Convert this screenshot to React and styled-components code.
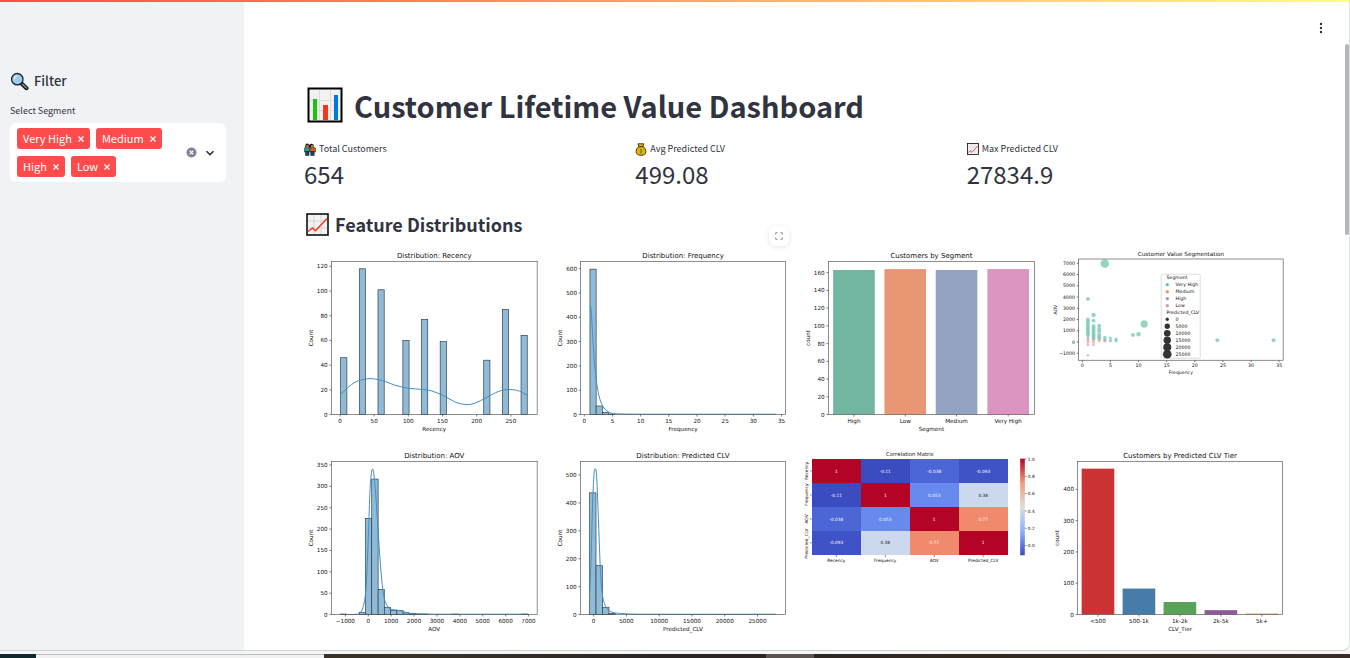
import React from "react";
import styled, { createGlobalStyle } from "styled-components";

const GlobalStyle = createGlobalStyle`
  *, *::before, *::after { box-sizing: border-box; }
  body {
    margin: 0;
    background: #f4f5f5;
    color: #31333f;
    font-family: "Noto Sans CJK SC", "Open Sans", sans-serif;
    font-size: 9px;
  }
  h1, h2, p, dl, dt, dd, figure { margin: 0; }
`;

/* ---------- page shell ---------- */

const Page = styled.div`
  display: flex;
  flex-direction: column;
  height: 100vh;
`;

const Window = styled.div`
  position: relative;
  display: flex;
  flex: 1;
  min-height: 0;
  overflow: hidden;
  background: #ffffff;
  border-bottom: 1px solid #cfd2d2;
  border-right: 1px solid #dfe1e1;
  border-bottom-right-radius: 8px;
`;

const Decoration = styled.div`
  position: absolute;
  top: 0;
  left: 0;
  right: 0;
  height: 2px;
  background: linear-gradient(90deg, #ff4b4b, #fffd80);
  z-index: 2;
`;

const ScrollThumb = styled.div`
  position: absolute;
  top: 44px;
  right: 0;
  width: 4px;
  height: 191px;
  border-radius: 2px;
  background: #b4b6ba;
`;

const MenuButton = styled.button`
  position: absolute;
  top: 18px;
  right: 18px;
  width: 20px;
  height: 20px;
  padding: 0;
  border: 0;
  background: none;
  display: grid;
  place-items: center;
`;

const DesktopEdge = styled.div`
  display: flex;
  height: 4px;
  margin-top: 3px;
  background: linear-gradient(90deg, #33291f, #3a3327 30%, #2a2425 50%, #33291f 70%, #3a2c24);
`;

const EdgePart = styled.div`
  width: ${(p) => p.$width}px;
  margin-left: ${(p) => p.$gap || 0}px;
  background: ${(p) => p.$color};
  border-top: 1px solid ${(p) => p.$line || p.$color};
`;

/* ---------- sidebar ---------- */

const Sidebar = styled.aside`
  flex: 0 0 244px;
  padding: 70px 18px 0 10px;
  background: #f0f2f6;
`;

const SidebarTitle = styled.h2`
  display: flex;
  align-items: center;
  gap: 5px;
  height: 22px;
  font-size: 13px;
  line-height: 22px;
  font-weight: 500;
`;

const FieldLabel = styled.label`
  display: block;
  margin-top: 11px;
  line-height: 16px;
`;

const MultiSelect = styled.div`
  display: flex;
  align-items: center;
  margin-top: 4px;
  padding: 5px 10px 5px 7px;
  border-radius: 6px;
  background: #ffffff;
`;

const Tags = styled.div`
  display: flex;
  flex: 1;
  flex-wrap: wrap;
  gap: 7px 6px;
`;

const Tag = styled.span`
  display: flex;
  align-items: center;
  gap: 5px;
  height: 21px;
  padding: 0 5px 0 6px;
  border-radius: 3px;
  background: #ff4b4b;
  color: #ffffff;
  font-size: 11px;
  line-height: 21px;
`;

const IconButton = styled.button`
  display: grid;
  place-items: center;
  padding: 0;
  border: 0;
  background: none;
  color: inherit;
`;

const SearchInput = styled.input`
  width: 24px;
  height: 21px;
  padding: 0;
  border: 0;
  outline: 0;
  background: transparent;
  font: inherit;
`;

const SelectActions = styled.div`
  display: flex;
  align-items: center;
  gap: 7px;
`;

/* ---------- main column ---------- */

const Main = styled.main`
  flex: 1;
  min-width: 0;
  padding: 87px 63px 0 60px;
`;

const Title = styled.h1`
  display: flex;
  align-items: center;
  gap: 11px;
  padding-left: 3px;
  font-size: 29px;
  line-height: 36px;
  font-weight: 700;
`;

const Metrics = styled.dl`
  display: grid;
  grid-template-columns: repeat(3, 1fr);
  gap: 12px;
  margin-top: 18px;
`;

const MetricLabel = styled.dt`
  display: flex;
  align-items: center;
  gap: 3px;
  line-height: 16px;
`;

const MetricValue = styled.dd`
  margin-top: 1px;
  font-size: 24px;
  line-height: 32px;
`;

const SectionTitle = styled.h2`
  display: flex;
  align-items: center;
  gap: 6px;
  margin-top: 20px;
  padding-left: 2px;
  font-size: 18px;
  line-height: 28px;
  font-weight: 600;
`;

const Charts = styled.div`
  display: grid;
  grid-template-columns: repeat(4, 1fr);
  align-items: start;
  gap: 16px 12px;
  margin-top: 12px;
`;

const Figure = styled.figure`
  position: relative;
`;

const Plot = styled.svg`
  display: block;
  width: 100%;
  height: auto;
  font-family: "DejaVu Sans", sans-serif;
  fill: #111111;
`;

const ExpandButton = styled(IconButton)`
  position: absolute;
  top: -24px;
  right: 0;
  width: 20px;
  height: 20px;
  border-radius: 6px;
  background: #ffffff;
  color: #8d9099;
  box-shadow: 0 1px 5px rgba(49, 51, 63, 0.12);
`;

/* ---------- icons ---------- */

const MagnifierIcon = () => (
  <svg width="19" height="19" viewBox="0 0 19 19" aria-hidden="true">
    <path d="M11.500 11.500l5 4.700" stroke="#111" strokeWidth="4" strokeLinecap="round" />
    <path d="M12.500 12.400l4 3.600" stroke="#8a8a8a" strokeWidth="1.600" strokeLinecap="round" />
    <circle cx="7.300" cy="7.200" r="5.700" fill="#9ccbf0" stroke="#222" strokeWidth="1.300" />
    <path d="M4.200 7.200a3.200 3.200 0 0 1 3-3.200" stroke="#e3f3ff" strokeWidth="1.200" fill="none" />
  </svg>
);

const BarChartIcon = () => (
  <svg width="36" height="36" viewBox="0 0 36 36" aria-hidden="true">
    <rect x="1.500" y="1.500" width="33" height="33" fill="#f2f2f2" stroke="#000" strokeWidth="2" />
    <path d="M12.500 3v30M23.500 3v30M3 13.500h30M3 23.500h30" stroke="#dcdcdc" />
    <rect x="6" y="12" width="4" height="21" fill="#16c60c" />
    <rect x="16" y="18" width="5" height="15" fill="#f03a17" />
    <rect x="27" y="8" width="4" height="25" fill="#0078d7" />
  </svg>
);

const LineChartIcon = ({ size }) => (
  <svg width={size} height={size} viewBox="0 0 23 23" aria-hidden="true">
    <rect x="1" y="1" width="21" height="21" fill="#f2f2f2" stroke="#111" strokeWidth="1.600" />
    <path d="M8 2v19M15 2v19M2 8h19M2 15h19" stroke="#d4d4d4" />
    <path d="M2 18.500l4.500-3.500 3 2.800L21 5.500" fill="none" stroke="#f03a17" strokeWidth="1.500" />
  </svg>
);

const PeopleIcon = () => (
  <svg width="12" height="13" viewBox="0 0 12 13" aria-hidden="true">
    <path d="M.8 4.500L1.600 1.500Q3.500-.5 5.300 2q1.900-2.300 4.300-.2l.8 3.200z" fill="#111" />
    <path d="M.4 5.300Q3 3.300 5.700 5.300V9H.4z" fill="#23a08b" stroke="#111" strokeWidth=".5" />
    <path d="M6.100 5.300Q9 3.300 11.600 5.300V9H6.100z" fill="#e8590c" stroke="#111" strokeWidth=".5" />
    <circle cx="3.400" cy="3.200" r="1.500" fill="#b87636" />
    <circle cx="8.300" cy="3.200" r="1.500" fill="#b87636" />
    <path d="M1.500 8.500h3.500v4H1.500zM6.700 8.500h3.500v4H6.700z" fill="#174966" stroke="#111" strokeWidth=".5" />
  </svg>
);

const MoneyIcon = () => (
  <svg width="12" height="13" viewBox="0 0 12 13" aria-hidden="true">
    <path d="M3 .8h5.800L7.900 3.500Q10.900 5.200 10.900 8.500q0 3.800-4.900 3.800T1.100 8.500Q1.100 5.200 4 3.500z" fill="#f2b200" stroke="#3b2c00" strokeWidth=".9" />
    <path d="M3.700 3.700h4.600" stroke="#3b2c00" />
    <path d="M7.400 6.800Q4.900 6 5 7.400q2.300.5 2.200 1.500Q6.700 10 4.700 9.400M6 5.800v4.900" fill="none" stroke="#2c9a3c" strokeWidth=".8" />
  </svg>
);

const CloseIcon = () => (
  <svg width="8" height="8" viewBox="0 0 8 8" aria-hidden="true">
    <path d="M1.500 1.500l5 5M6.500 1.500l-5 5" stroke="currentColor" strokeWidth="1.200" />
  </svg>
);

const ClearIcon = () => (
  <svg width="11" height="11" viewBox="0 0 11 11" aria-hidden="true">
    <circle cx="5.500" cy="5.500" r="5" fill="#808495" />
    <path d="M3.700 3.700l3.600 3.600M7.300 3.700L3.700 7.300" stroke="#fff" strokeWidth="1.200" />
  </svg>
);

const ChevronIcon = () => (
  <svg width="12" height="12" viewBox="0 0 12 12" aria-hidden="true">
    <path d="M2.500 4.200L6 7.600l3.500-3.400" fill="none" stroke="#31333f" strokeWidth="1.600" />
  </svg>
);

const KebabIcon = () => (
  <svg width="4" height="12" viewBox="0 0 4 12" fill="#31333f" aria-hidden="true">
    <circle cx="2" cy="2" r="1.200" />
    <circle cx="2" cy="6" r="1.200" />
    <circle cx="2" cy="10" r="1.200" />
  </svg>
);

const ExpandIcon = () => (
  <svg width="8" height="8" viewBox="0 0 8 8" aria-hidden="true">
    <path d="M.7 2.600V.7h1.900M5.400.7h1.900v1.900M7.300 5.400v1.900H5.400M2.600 7.300H.7V5.400" fill="none" stroke="currentColor" />
  </svg>
);

/* ---------- plotting ---------- */

const Label = ({ x, y, size = 17, anchor = "middle", rotate, fill, children }) => (
  <text
    x={x}
    y={y}
    dy="0.36em"
    fontSize={size}
    textAnchor={anchor}
    fill={fill}
    transform={rotate ? `rotate(-90 ${x} ${y})` : undefined}
  >
    {children}
  </text>
);

/* Maps a data range [d0, d1] on the drawing range [p0, p1]. */
const scale = ([d0, p0, d1, p1]) => (v) => p0 + ((v - d0) * (p1 - p0)) / (d1 - d0);

const smoothPath = (pts) => {
  let d = `M${pts[0][0]} ${pts[0][1]}`;
  for (let i = 0; i < pts.length - 1; i++) {
    const a = pts[i - 1] || pts[i];
    const b = pts[i];
    const c = pts[i + 1];
    const e = pts[i + 2] || c;
    const k = (c[0] - b[0]) / 3;
    const m1 = a === b ? (c[1] - b[1]) / (c[0] - b[0]) : (c[1] - a[1]) / (c[0] - a[0]);
    const m2 = e === c ? (c[1] - b[1]) / (c[0] - b[0]) : (e[1] - b[1]) / (e[0] - b[0]);
    d += `C${b[0] + k} ${b[1] + m1 * k} ${c[0] - k} ${c[1] - m2 * k} ${c[0]} ${c[1]}`;
  }
  return d;
};

/* Negative numbers carry a true minus sign; category names keep their hyphen. */
const tickText = (v) => (typeof v === "number" && v < 0 ? `\u2212${-v}` : v);

const Axes = ({ title, xLabel, yLabel, frame, xTicks, yTicks, xLabelY, yLabelX, height = 552, small, children }) => {
  const [left, top, right, bottom] = frame;
  const size = small ? 14 : 17;
  return (
    <Plot viewBox={`0 0 710 ${height}`} role="img" aria-label={title}>
      {children}
      <rect x={left} y={top} width={right - left} height={bottom - top} fill="none" stroke="#555" strokeWidth="2" />
      {xTicks.map(([p, text]) => (
        <g key={text}>
          <path d={`M${p} ${bottom}v6`} stroke="#444" strokeWidth="2" />
          <Label x={p} y={bottom + (small ? 16 : 20)} size={size}>{tickText(text)}</Label>
        </g>
      ))}
      {yTicks.map(([p, text]) => (
        <g key={text}>
          <path d={`M${left} ${p}h-6`} stroke="#444" strokeWidth="2" />
          <Label x={left - 11} y={p} anchor="end" size={size}>{tickText(text)}</Label>
        </g>
      ))}
      <Label x={(left + right) / 2} y={small ? 13 : 16} size={small ? 17 : 21}>{title}</Label>
      <Label x={(left + right) / 2} y={xLabelY} size={size}>{xLabel}</Label>
      <Label x={yLabelX} y={(top + bottom) / 2} size={size} rotate>{yLabel}</Label>
    </Plot>
  );
};

const ticksOf = (values, s) => values.map((v) => [s(v), v]);

const Histogram = ({ title, xLabel, x, y, xValues, yValues, frame, bins, curve }) => {
  const sx = scale(x);
  const sy = scale(y);
  return (
    <Axes title={title} xLabel={xLabel} yLabel="Count" frame={frame} xTicks={ticksOf(xValues, sx)} yTicks={ticksOf(yValues, sy)} xLabelY={538} yLabelX={20}>
      {bins.map(([from, to, count]) => (
        <rect key={from} x={sx(from)} y={sy(count)} width={sx(to) - sx(from)} height={sy(0) - sy(count)} fill="#8fbbd9" stroke="#2f3a42" strokeWidth="2" />
      ))}
      <path d={smoothPath(curve)} fill="none" stroke="#3d8fc6" strokeWidth="3" strokeLinejoin="round" />
    </Axes>
  );
};

const CountPlot = ({ title, xLabel, y, yValues, frame, bars, barWidth, yLabelX }) => {
  const sy = scale(y);
  return (
    <Axes title={title} xLabel={xLabel} yLabel="count" frame={frame} xTicks={bars.map((b) => [b.center, b.name])} yTicks={ticksOf(yValues, sy)} xLabelY={538} yLabelX={yLabelX}>
      {bars.map((b) => (
        <rect key={b.name} x={b.center - barWidth / 2} y={sy(b.count)} width={barWidth} height={sy(0) - sy(b.count)} fill={b.color} />
      ))}
    </Axes>
  );
};

const recencyBins = [[0, 46], [3, 118], [6, 101], [10, 60], [13, 77], [16, 59], [23, 44], [26, 85], [29, 64]].map(
  ([i, n]) => [1 + i * 9.1, 1 + (i + 1) * 9.1, n]
);
const recencyCurve = [[111, 433], [133, 412], [153, 397], [173, 390], [200, 386], [223, 389], [248, 396], [273, 406], [313, 415], [358, 419], [383, 423], [418, 437], [453, 456], [473, 462], [493, 464], [513, 460], [548, 443], [583, 425], [613, 419], [638, 421], [656, 428], [672, 437]];
const frequencyBins = [[1, 2.1, 598], [2.1, 3.2, 35], [3.2, 4.3, 9], [4.3, 5.4, 2]];
const frequencyCurve = [[110, 168], [114, 175], [119, 255], [124, 335], [132, 405], [140, 445], [150, 470], [162, 483], [174, 490], [192, 492], [252, 493], [670, 493]];
const aovBins = [[-1215, -940, 1], [-400, -125, 5], [-125, 150, 225], [150, 430, 317], [430, 700, 59], [700, 975, 17], [975, 1245, 10], [1245, 1520, 9], [1520, 1800, 4], [1800, 2080, 3], [2080, 2600, 1], [3650, 3920, 1], [6700, 6980, 1]];
const aovCurve = [[109, 493], [158, 493], [173, 483], [183, 445], [188, 385], [194, 235], [199, 105], [206, 57], [213, 105], [220, 205], [228, 325], [236, 415], [244, 455], [256, 475], [273, 480], [288, 482], [318, 491], [348, 492], [388, 493], [673, 493]];
const clvBins = [[-610, 360, 436], [360, 1350, 175], [1350, 2340, 26], [2340, 3300, 4]];
const clvCurve = [[110, 435], [114, 335], [119, 155], [123, 75], [127, 56], [131, 80], [137, 225], [142, 355], [147, 425], [154, 460], [164, 477], [177, 487], [207, 491], [252, 493], [670, 493]];

const segments = [
  { name: "High", center: 159, count: 163, color: "#72b6a1" },
  { name: "Low", center: 313, count: 164, color: "#e99675" },
  { name: "Medium", center: 467, count: 163, color: "#95a3c3" },
  { name: "Very High", center: 622, count: 164, color: "#db95c0" },
];
const tiers = [
  { name: "<500", center: 144, count: 466, color: "#cb3335" },
  { name: "500-1k", center: 267, count: 83, color: "#477ca8" },
  { name: "1k-2k", center: 390, count: 40, color: "#59a257" },
  { name: "2k-5k", center: 513, count: 14, color: "#905998" },
  { name: "5k+", center: 636, count: 3, color: "#d9924d" },
];

const GREEN = "#66c2a5";
const ORANGE = "#fc8d62";
const BLUE = "#8da0cb";
const PINK = "#e78ac3";
const column = (x, values, r = 6) => values.map((v) => [x, v, r, GREEN]);
const customers = [
  [4, 6980, 13, GREEN], [1, 3820, 6, GREEN], [2, 2400, 7, GREEN], [2, 1900, 6, GREEN],
  [11, 1600, 11, GREEN], [9, 620, 6, GREEN], [10, 700, 7, GREEN], [24, 150, 6, GREEN], [34, 150, 6, GREEN],
  ...column(1, [2000, 1820, 1650, 1480, 1300, 1130, 960, 800, 640]),
  ...column(2, [1420, 1240, 1080, 920, 760, 600, 440, 300]),
  ...column(3, [1450, 1180, 950, 650, 450, 260]),
  ...column(4, [420, 280, 150], 5), ...column(5, [350, 120], 5), ...column(6, [260, 110], 5),
  [1, 450, 4, BLUE], [1, 350, 4, BLUE], [2, 300, 4, BLUE], [4, 200, 4, BLUE],
  [1, 220, 4, ORANGE], [1, 130, 4, ORANGE], [2, 130, 4, ORANGE], [3, 90, 4, ORANGE],
  [1, -40, 4, PINK], [1, -260, 4, PINK], [2, -40, 4, PINK], [2, -260, 4, PINK], [4, 50, 4, PINK], [1, -1180, 4, PINK],
];
const hueLegend = [["Very High", GREEN], ["Medium", ORANGE], ["High", BLUE], ["Low", PINK]];
const sizeLegend = [["0", 5], ["5000", 8], ["10000", 10], ["15000", 11], ["20000", 12], ["25000", 13]];

const ScatterPlot = () => {
  const sx = scale([0, 97, 35, 688]);
  const sy = scale([-1000, 310, 7000, 40]);
  return (
    <Axes title="Customer Value Segmentation" xLabel="Frequency" yLabel="AOV" frame={[86, 27, 700, 331]} height={378} small
      xTicks={ticksOf([0, 5, 10, 15, 20, 25, 30, 35], sx)}
      yTicks={ticksOf([-1000, 0, 1000, 2000, 3000, 4000, 5000, 6000, 7000], sy)}
      xLabelY={366} yLabelX={15}>
      {customers.map(([x, y, r, color], i) => (
        <circle key={i} cx={sx(x)} cy={sy(y)} r={r} fill={color} fillOpacity="0.7" stroke="#fff" strokeWidth="0.5" />
      ))}
      <rect x="334" y="73" width="117" height="252" rx="3" fill="#fff" fillOpacity="0.8" stroke="#ccc" strokeWidth="2" />
      <Label x={350} y={83} size={14} anchor="start">Segment</Label>
      {hueLegend.map(([name, color], i) => (
        <g key={name}>
          <circle cx="352" cy={104 + i * 21} r="5" fill={color} />
          <Label x={377} y={104 + i * 21} size={14} anchor="start">{name}</Label>
        </g>
      ))}
      <Label x={350} y={187} size={14} anchor="start">Predicted_CLV</Label>
      {sizeLegend.map(([name, r], i) => (
        <g key={name}>
          <circle cx="352" cy={208 + i * 21} r={r} fill="#333" />
          <Label x={377} y={208 + i * 21} size={14} anchor="start">{name}</Label>
        </g>
      ))}
    </Axes>
  );
};

const features = ["Recency", "Frequency", "AOV", "Predicted_CLV"];
const correlations = [
  ["1", "-0.11", "-0.038", "-0.093"],
  ["-0.11", "1", "0.053", "0.38"],
  ["-0.038", "0.053", "1", "0.77"],
  ["-0.093", "0.38", "0.77", "1"],
];
const heat = { "1": "#b40426", "-0.11": "#3b4cc0", "-0.038": "#4c66d6", "-0.093": "#3f53c6", "0.053": "#688aef", "0.38": "#cbd8ee", "0.77": "#f08a6c" };
const rowLabelY = [63, 134, 207, 281];

const Heatmap = () => (
  <Plot viewBox="0 0 710 345" role="img" aria-label="Correlation Matrix">
    <defs>
      <linearGradient id="coolwarm" x1="0" y1="1" x2="0" y2="0">
        <stop offset="0" stopColor="#3b4cc0" />
        <stop offset="0.25" stopColor="#8db0fe" />
        <stop offset="0.5" stopColor="#dddddd" />
        <stop offset="0.75" stopColor="#f49a7b" />
        <stop offset="1" stopColor="#b40426" />
      </linearGradient>
    </defs>
    <Label x={327} y={12} size={16}>Correlation Matrix</Label>
    {correlations.map((row, r) =>
      row.map((value, c) => (
        <g key={`${r}-${c}`}>
          <rect x={32 + c * 147} y={27 + r * 72} width="147" height="72" fill={heat[value]} shapeRendering="crispEdges" />
          <Label x={106 + c * 147} y={63 + r * 72} size={13} fill={value === "0.38" ? "#262626" : "#f4f4f4"}>{value}</Label>
        </g>
      ))
    )}
    {features.map((name, i) => (
      <g key={name}>
        <path d={`M${106 + i * 147} 315v6M32 ${63 + i * 72}h-5`} stroke="#444" strokeWidth="2" />
        <Label x={106 + i * 147} y={331} size={13}>{name}</Label>
        <Label x={16} y={rowLabelY[i]} size={13} rotate>{name}</Label>
      </g>
    ))}
    <rect x="658" y="26" width="14" height="290" fill="url(#coolwarm)" />
    {["1.0", "0.8", "0.6", "0.4", "0.2", "0.0"].map((v, i) => (
      <g key={v}>
        <path d={`M672 ${27 + i * 52}h5`} stroke="#444" strokeWidth="2" />
        <Label x={681} y={27 + i * 52} size={13} anchor="start">{v}</Label>
      </g>
    ))}
  </Plot>
);

/* ---------- page ---------- */

const selected = ["Very High", "Medium", "High", "Low"];
const metrics = [
  { label: "Total Customers", value: "654", icon: <PeopleIcon /> },
  { label: "Avg Predicted CLV", value: "499.08", icon: <MoneyIcon /> },
  { label: "Max Predicted CLV", value: "27834.9", icon: <LineChartIcon size={12} /> },
];

export default function App() {
  return (
    <Page>
      <GlobalStyle />
      <Window>
        <Decoration />
        <Sidebar>
          <SidebarTitle><MagnifierIcon />Filter</SidebarTitle>
          <FieldLabel htmlFor="segment">Select Segment</FieldLabel>
          <MultiSelect>
            <Tags>
              {selected.map((name) => (
                <Tag key={name}>
                  {name}
                  <IconButton type="button" aria-label={`Remove ${name}`}><CloseIcon /></IconButton>
                </Tag>
              ))}
              <SearchInput id="segment" type="text" />
            </Tags>
            <SelectActions>
              <IconButton type="button" aria-label="Clear all"><ClearIcon /></IconButton>
              <IconButton type="button" aria-label="Open"><ChevronIcon /></IconButton>
            </SelectActions>
          </MultiSelect>
        </Sidebar>
        <Main>
          <Title><BarChartIcon />Customer Lifetime Value Dashboard</Title>
          <Metrics>
            {metrics.map((m) => (
              <div key={m.label}>
                <MetricLabel>{m.icon}{m.label}</MetricLabel>
                <MetricValue>{m.value}</MetricValue>
              </div>
            ))}
          </Metrics>
          <SectionTitle><LineChartIcon size={23} />Feature Distributions</SectionTitle>
          <Charts>
            <Figure>
              <Histogram title="Distribution: Recency" xLabel="Recency" frame={[82, 34, 700, 494]} x={[0, 108, 250, 621]} y={[0, 494, 120, 49]}
                xValues={[0, 50, 100, 150, 200, 250]} yValues={[0, 20, 40, 60, 80, 100, 120]} bins={recencyBins} curve={recencyCurve} />
            </Figure>
            <Figure>
              <Histogram title="Distribution: Frequency" xLabel="Frequency" frame={[83, 34, 698, 494]} x={[0, 94, 35, 686]} y={[0, 494, 600, 56]}
                xValues={[0, 5, 10, 15, 20, 25, 30, 35]} yValues={[0, 100, 200, 300, 400, 500, 600]} bins={frequencyBins} curve={frequencyCurve} />
              <ExpandButton type="button" aria-label="Fullscreen"><ExpandIcon /></ExpandButton>
            </Figure>
            <Figure>
              <CountPlot title="Customers by Segment" xLabel="Segment" frame={[82, 34, 701, 494]} y={[0, 494, 160, 68]}
                yValues={[0, 20, 40, 60, 80, 100, 120, 140, 160]} bars={segments} barWidth={125} yLabelX={21} />
            </Figure>
            <Figure><ScatterPlot /></Figure>
            <Figure>
              <Histogram title="Distribution: AOV" xLabel="AOV" frame={[82, 34, 700, 494]} x={[0, 193, 7000, 674]} y={[0, 494, 350, 45]}
                xValues={[-1000, 0, 1000, 2000, 3000, 4000, 5000, 6000, 7000]} yValues={[0, 50, 100, 150, 200, 250, 300, 350]} bins={aovBins} curve={aovCurve} />
            </Figure>
            <Figure>
              <Histogram title="Distribution: Predicted CLV" xLabel="Predicted_CLV" frame={[82, 34, 698, 494]} x={[0, 122, 25000, 614]} y={[0, 494, 500, 75]}
                xValues={[0, 5000, 10000, 15000, 20000, 25000]} yValues={[0, 100, 200, 300, 400, 500]} bins={clvBins} curve={clvCurve} />
            </Figure>
            <Figure><Heatmap /></Figure>
            <Figure>
              <CountPlot title="Customers by Predicted CLV Tier" xLabel="CLV_Tier" frame={[83, 34, 698, 494]} y={[0, 494, 400, 118]}
                yValues={[0, 100, 200, 300, 400]} bars={tiers} barWidth={98} yLabelX={22} />
            </Figure>
          </Charts>
        </Main>
        <MenuButton type="button" aria-label="Main menu"><KebabIcon /></MenuButton>
        <ScrollThumb />
      </Window>
      <DesktopEdge>
        <EdgePart $width={36} $color="#10282b" />
        <EdgePart $width={288} $color="#f1f1f1" $line="#bdbdbd" />
        <EdgePart $width={48} $gap={442} $color="#5b5350" />
      </DesktopEdge>
    </Page>
  );
}
